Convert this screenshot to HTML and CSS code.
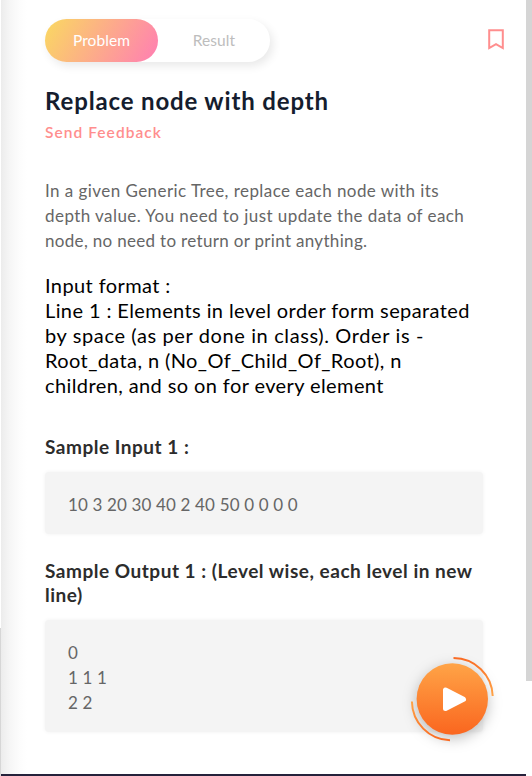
FILE: index.html
```html
<!DOCTYPE html>
<html lang="en">
<head>
<meta charset="utf-8">
<title>Replace node with depth</title>
<link rel="stylesheet" href="styles.css">
</head>
<body>
<div class="edge"><div class="edge-thumb"></div></div>
<main class="panel">
  <header class="top">
    <nav class="tabs">
      <a class="tab active">Problem</a>
      <a class="tab">Result</a>
    </nav>
    <svg class="bookmark" width="16" height="21" viewBox="0 0 16 21"><path d="M1.2 1.2H14.8V19L8 15.1 1.2 19Z" fill="none" stroke="#ff8e8e" stroke-width="2"/></svg>
  </header>
  <h1 class="title">Replace node with depth</h1>
  <a class="feedback">Send Feedback</a>
  <p class="intro">In a given Generic Tree, replace each node with its<br>depth value. You need to just update the data of each<br><span class="tight">node, no need to return or print anything.</span></p>
  <div class="format">Input format :<br>Line 1 : Elements in level order form separated<br><span class="loose">by space (as per done in class). Order is -</span><br>Root_data, n (No_Of_Child_Of_Root), n<br>children, and so on for every element</div>
  <h2 class="heading">Sample Input 1 :</h2>
  <pre class="sample">10 3 20 30 40 2 40 50 0 0 0 0</pre>
  <h2 class="heading second">Sample Output 1 : (Level wise, each level in new<br>line)</h2>
  <pre class="sample">0
1 1 1
2 2</pre>
</main>
<div class="scroll"><div class="scroll-thumb"></div></div>
<button class="run" aria-label="Run">
  <svg width="106" height="106" viewBox="0 0 106 106">
    <defs>
      <linearGradient id="fill" x1="0" y1="0" x2="0" y2="1"><stop offset="0" stop-color="#ffa447"/><stop offset="1" stop-color="#fa661f"/></linearGradient>
      <linearGradient id="arcA" x1="0" y1="0" x2="0" y2="1"><stop offset="0" stop-color="#fa6b23"/><stop offset="1" stop-color="#ffa447"/></linearGradient>
      <linearGradient id="arcB" x1="0" y1="0" x2="0" y2="1"><stop offset="0" stop-color="#ffa447"/><stop offset="1" stop-color="#fa6b23"/></linearGradient>
    </defs>
    <circle class="disc" cx="53.3" cy="53" r="35.7" fill="url(#fill)"/>
    <path d="M54.5 12A39.5 39 0 0 1 93.7 50" fill="none" stroke="url(#arcA)" stroke-width="2"/>
    <path d="M12.9 55.5A39 39.5 0 0 0 51 94.3" fill="none" stroke="url(#arcB)" stroke-width="2"/>
    <path d="M46.5 44V62.6L64.5 53.3Z" fill="#fff" stroke="#fff" stroke-width="5" stroke-linejoin="round"/>
  </svg>
</button>
</body>
</html>
```
FILE: styles.css
```css
* { box-sizing: border-box; }
body {
  margin: 0;
  height: 776px;
  display: flex;
  overflow: hidden;
  background: #fff;
  font-family: Lato, "Open Sans", sans-serif;
}
.edge { width: 1px; padding-top: 628px; background: #fff; }
.edge-thumb { height: 148px; background: #d6d6d6; }
.panel {
  width: 525px;
  height: 776px;
  padding: 19px 22px 0 44px;
  border-bottom: 2px solid #25223b;
  background: linear-gradient(90deg, #ececec, #f6f6f6 9px, #fcfcfc 18px, #fff 26px);
}
.top { display: flex; justify-content: space-between; }
.tabs {
  display: flex;
  width: 225px;
  height: 43px;
  border-radius: 22px;
  background: #fff;
  box-shadow: 3px 4px 10px rgba(0, 0, 0, .09);
}
.tab {
  width: 112px;
  text-align: center;
  font-size: 15.5px;
  line-height: 43px;
  letter-spacing: .1px;
  color: #bdbdbd;
}
.tab.active {
  width: 113px;
  border-radius: 22px;
  background: linear-gradient(120deg, #fad961, #ff7eb3);
  color: #fff;
}
.bookmark { margin: 10px 0 0; }
.title {
  margin: 24px 0 0;
  font-size: 24px;
  line-height: 30px;
  letter-spacing: .85px;
  color: #151d2e;
}
.feedback {
  display: block;
  margin-top: 6px;
  font-size: 15.5px;
  font-weight: 600;
  line-height: 20px;
  letter-spacing: 1.05px;
  color: #ff8e8e;
}
.intro {
  margin: 36px 0 0;
  font-size: 17px;
  line-height: 25px;
  letter-spacing: .44px;
  color: #666;
  white-space: nowrap;
}
.tight { letter-spacing: .32px; }
.format {
  margin-top: 20px;
  font-size: 20px;
  line-height: 25px;
  letter-spacing: .4px;
  color: #000;
  white-space: nowrap;
}
.loose { letter-spacing: .62px; }
.heading {
  margin: 37px 0 0;
  font-size: 19px;
  line-height: 24px;
  letter-spacing: .52px;
  color: #2c2c2c;
  white-space: nowrap;
}
.heading.second { margin-top: 25px; }
.sample {
  width: 438px;
  margin: 13px 0 0;
  padding: 20px 23px 17px;
  border-radius: 4px;
  background: #f4f4f4;
  box-shadow: 0 0 4px rgba(0, 0, 0, .06);
  font: 17px/25px Lato, sans-serif;
  letter-spacing: .15px;
  color: #666;
}
.scroll { width: 6px; }
.scroll-thumb { height: 681px; background: #d5d5d5; }
.run {
  position: absolute;
  left: 399px;
  top: 646px;
  padding: 0;
  border: 0;
  background: none;
  line-height: 0;
}
.run svg { overflow: visible; }
.disc { filter: drop-shadow(0 4px 7px rgba(0, 0, 0, .25)); }
```
